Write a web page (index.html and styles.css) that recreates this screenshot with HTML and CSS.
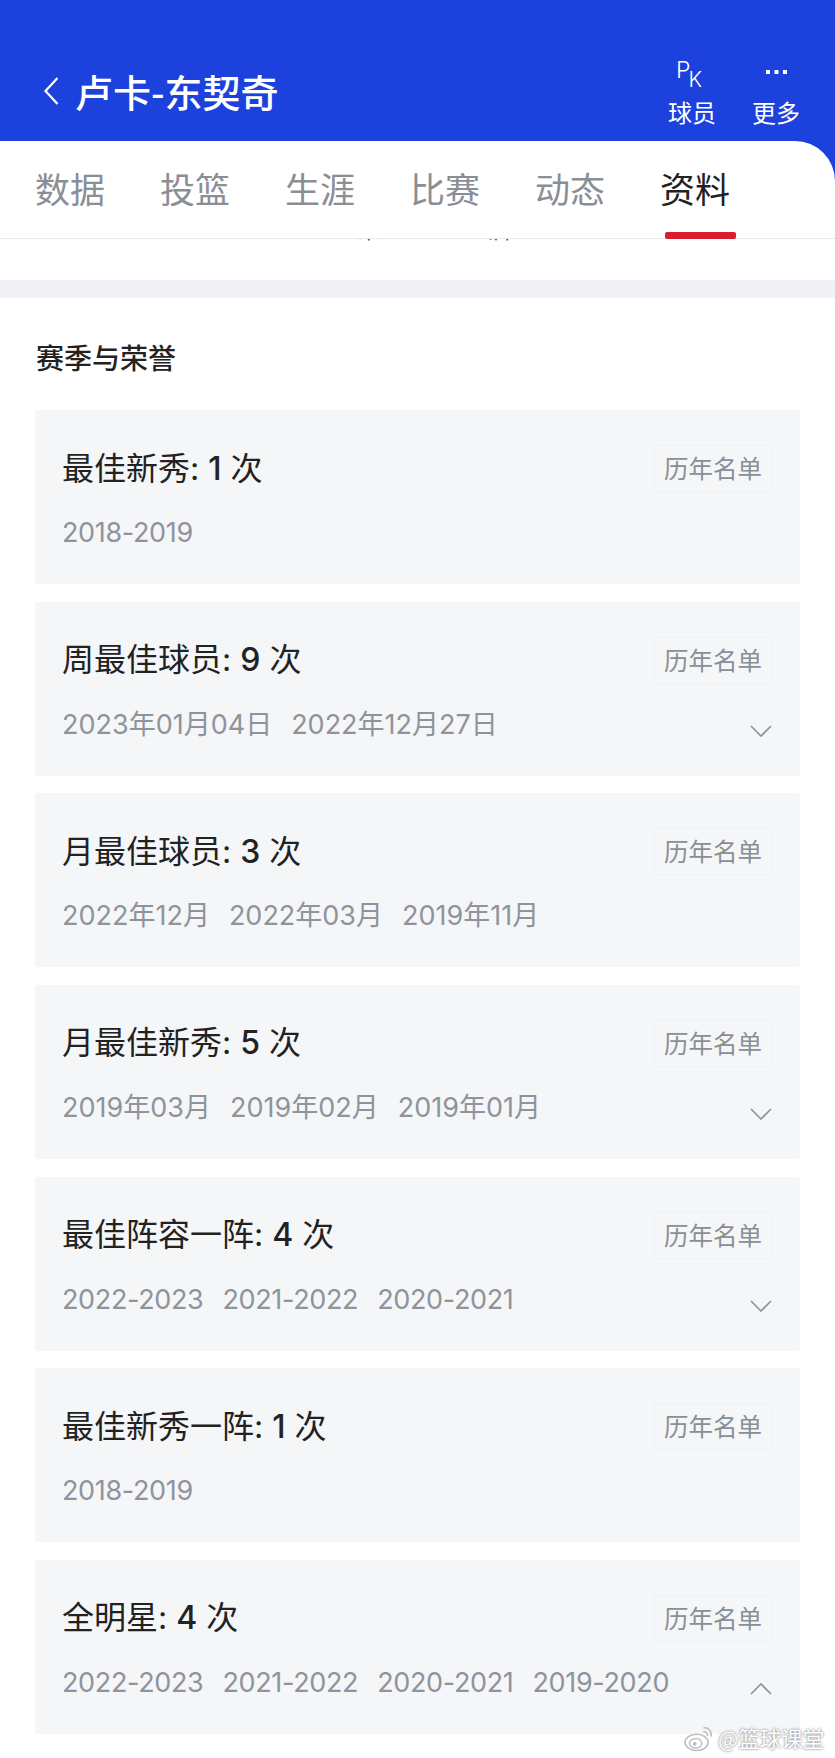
FILE: index.html
```html
<!DOCTYPE html>
<html lang="zh-CN">
<head>
<meta charset="utf-8">
<title>卢卡-东契奇</title>
<link rel="stylesheet" href="styles.css">
</head>
<body>
<div class="page">
  <header class="topbar">
    <div class="identity">
      <svg class="back" viewBox="0 0 16 30" width="16" height="30"><path d="M14.500 2 2.500 15l12 13" fill="none" stroke="#fff" stroke-width="2.200"/></svg>
      <h1 class="name">卢卡-东契奇</h1>
    </div>
    <div class="actions">
      <div class="action">
        <span class="pk">P<span class="pk-k">K</span></span>
        <span class="action-label">球员</span>
      </div>
      <div class="action">
        <svg class="dots" viewBox="0 0 21 24" width="21" height="24"><rect x="0" y="10" width="4" height="4" fill="#fff"/><rect x="8.500" y="10" width="4" height="4" fill="#fff"/><rect x="17" y="10" width="4" height="4" fill="#fff"/></svg>
        <span class="action-label">更多</span>
      </div>
    </div>
  </header>

  <div class="tabs-back">
    <nav class="tabs">
      <span class="tab">数据</span>
      <span class="tab">投篮</span>
      <span class="tab">生涯</span>
      <span class="tab">比赛</span>
      <span class="tab">动态</span>
      <span class="tab tab-active">资料</span>
    </nav>
  </div>

  <div class="remnant"><span class="remnant-text">2.01米</span><span class="remnant-text">104公斤</span></div>
  <div class="divider"></div>

  <section class="honors">
    <h2 class="section-title">赛季与荣誉</h2>
    <div class="cards">
      <article class="card">
        <div class="card-head"><span class="card-title">最佳新秀: <b class="num">1</b> 次</span><span class="roster">历年名单</span></div>
        <div class="card-foot"><div class="dates seasons"><span>2018-2019</span></div></div>
      </article>
      <article class="card">
        <div class="card-head"><span class="card-title">周最佳球员: <b class="num">9</b> 次</span><span class="roster">历年名单</span></div>
        <div class="card-foot">
          <div class="dates"><span>2023年01月04日</span><span>2022年12月27日</span></div>
          <svg class="chev" viewBox="0 0 22 12" width="22" height="12"><path d="M1 1l10 10L21 1" fill="none" stroke="#8c9096" stroke-width="1.600"/></svg>
        </div>
      </article>
      <article class="card">
        <div class="card-head"><span class="card-title">月最佳球员: <b class="num">3</b> 次</span><span class="roster">历年名单</span></div>
        <div class="card-foot"><div class="dates"><span>2022年12月</span><span>2022年03月</span><span>2019年11月</span></div></div>
      </article>
      <article class="card">
        <div class="card-head"><span class="card-title">月最佳新秀: <b class="num">5</b> 次</span><span class="roster">历年名单</span></div>
        <div class="card-foot">
          <div class="dates"><span>2019年03月</span><span>2019年02月</span><span>2019年01月</span></div>
          <svg class="chev" viewBox="0 0 22 12" width="22" height="12"><path d="M1 1l10 10L21 1" fill="none" stroke="#8c9096" stroke-width="1.600"/></svg>
        </div>
      </article>
      <article class="card">
        <div class="card-head"><span class="card-title">最佳阵容一阵: <b class="num">4</b> 次</span><span class="roster">历年名单</span></div>
        <div class="card-foot">
          <div class="dates seasons"><span>2022-2023</span><span>2021-2022</span><span>2020-2021</span></div>
          <svg class="chev" viewBox="0 0 22 12" width="22" height="12"><path d="M1 1l10 10L21 1" fill="none" stroke="#8c9096" stroke-width="1.600"/></svg>
        </div>
      </article>
      <article class="card">
        <div class="card-head"><span class="card-title">最佳新秀一阵: <b class="num">1</b> 次</span><span class="roster">历年名单</span></div>
        <div class="card-foot"><div class="dates seasons"><span>2018-2019</span></div></div>
      </article>
      <article class="card">
        <div class="card-head"><span class="card-title">全明星: <b class="num">4</b> 次</span><span class="roster">历年名单</span></div>
        <div class="card-foot">
          <div class="dates seasons"><span>2022-2023</span><span>2021-2022</span><span>2020-2021</span><span>2019-2020</span></div>
          <svg class="chev" viewBox="0 0 22 12" width="22" height="12"><path d="M1 11 11 1l10 10" fill="none" stroke="#8c9096" stroke-width="1.600"/></svg>
        </div>
      </article>
    </div>
  </section>

  <div class="watermark">
    <svg class="weibo" viewBox="0 0 32 28" width="31" height="27">
      <ellipse cx="13" cy="18" rx="12" ry="8.500" fill="#fff" stroke="#b9bcc0" stroke-width="1.600"/>
      <ellipse cx="12" cy="19" rx="6.500" ry="4.800" fill="none" stroke="#b9bcc0" stroke-width="1.400"/>
      <circle cx="11" cy="19.500" r="2" fill="#b9bcc0"/>
      <path d="M20 3c5-1 9 3 8 9M20 7c3-.5 4.800 1.500 4.300 4.500" fill="none" stroke="#b9bcc0" stroke-width="1.600"/>
    </svg>
    <span class="watermark-text">@篮球课堂</span>
  </div>
</div>
</body>
</html>
```
FILE: styles.css
```css
* { box-sizing: border-box; margin: 0; padding: 0; }
html, body { background: #fff; }
body { font-family: "Noto Sans CJK SC", "Noto Sans", sans-serif; }
.page { position: relative; width: 835px; height: 1758px; overflow: hidden; background: #fff; }

.topbar { height: 141px; background: #1d41dd; display: flex; justify-content: space-between; padding: 60px 35px 0 43px; color: #fff; }
.identity { display: flex; align-items: center; gap: 16px; height: 62px; }
.back { display: block; }
.name { font-size: 38px; font-weight: 500; line-height: 62px; white-space: nowrap; }
.actions { display: flex; gap: 36px; }
.action { display: flex; flex-direction: column; align-items: center; width: 48px; }
.pk { height: 36px; margin-right: 6px; font-family: "Inter", "Liberation Sans", sans-serif; font-size: 23px; font-weight: 300; line-height: 20px; white-space: nowrap; }
.pk-k { font-size: 21px; position: relative; top: 9px; margin-left: -2px; }
.dots { display: block; height: 36px; padding-bottom: 12px; }
.action-label { font-size: 24px; line-height: 32px; white-space: nowrap; }

.tabs-back { background: #1d41dd; }
.tabs { height: 98px; background: #fff; border-top-right-radius: 40px; border-bottom: 1px solid #e7e8eb; display: flex; gap: 55px; padding: 25px 0 0 35px; }
.tab { position: relative; width: 70px; font-size: 35px; line-height: 44px; color: #8a8e95; white-space: nowrap; }
.tab-active { color: #222; }
.tab-active::after { content: ""; position: absolute; left: 5px; top: 66px; width: 71px; height: 7px; background: #d81e2c; border-radius: 2px; }

.remnant { height: 41px; overflow: hidden; padding-left: 315px; display: flex; gap: 55px; align-items: flex-start; }
.remnant-text { display: block; margin-top: -27px; font-size: 22px; line-height: 32px; color: #555; white-space: nowrap; }
.divider { height: 18px; background: #f0f1f4; }

.honors { padding: 0 35px; }
.section-title { height: 112px; padding-top: 40px; padding-left: 1px; font-size: 28px; line-height: 38px; font-weight: 500; color: #222; }
.cards { display: flex; flex-direction: column; gap: 17.670px; }
.card { height: 174px; background: #f5f6f8; padding: 35px 28px 0 27px; border-radius: 2px; }
.card-head { display: flex; justify-content: space-between; align-items: center; height: 47px; }
.card-title { font-family: "Inter", "Noto Sans CJK SC", sans-serif; font-size: 32px; line-height: 40px; color: #222; white-space: nowrap; }
.num { font-weight: 500; }
.roster { display: block; width: 118px; height: 47px; border: 1px solid #eef0f3; font-size: 24.500px; line-height: 44px; text-align: center; color: #8a8e95; white-space: nowrap; }
.card-foot { display: flex; justify-content: space-between; align-items: center; margin-top: 21px; height: 40px; }
.dates { display: flex; gap: 19px; font-family: "Inter", "Noto Sans CJK SC", sans-serif; font-size: 27px; line-height: 40px; color: #8f939b; white-space: nowrap; }
.seasons { letter-spacing: -0.35px; }
.chev { display: block; margin-top: 12px; }

.watermark { position: absolute; left: 684px; top: 1723px; display: flex; align-items: center; gap: 3px; }
.weibo { display: block; }
.watermark-text { font-size: 21.500px; line-height: 30px; color: #fff; text-shadow: 0 0 2px #8c8f94, 0 0 3px #aaa; white-space: nowrap; }
```
